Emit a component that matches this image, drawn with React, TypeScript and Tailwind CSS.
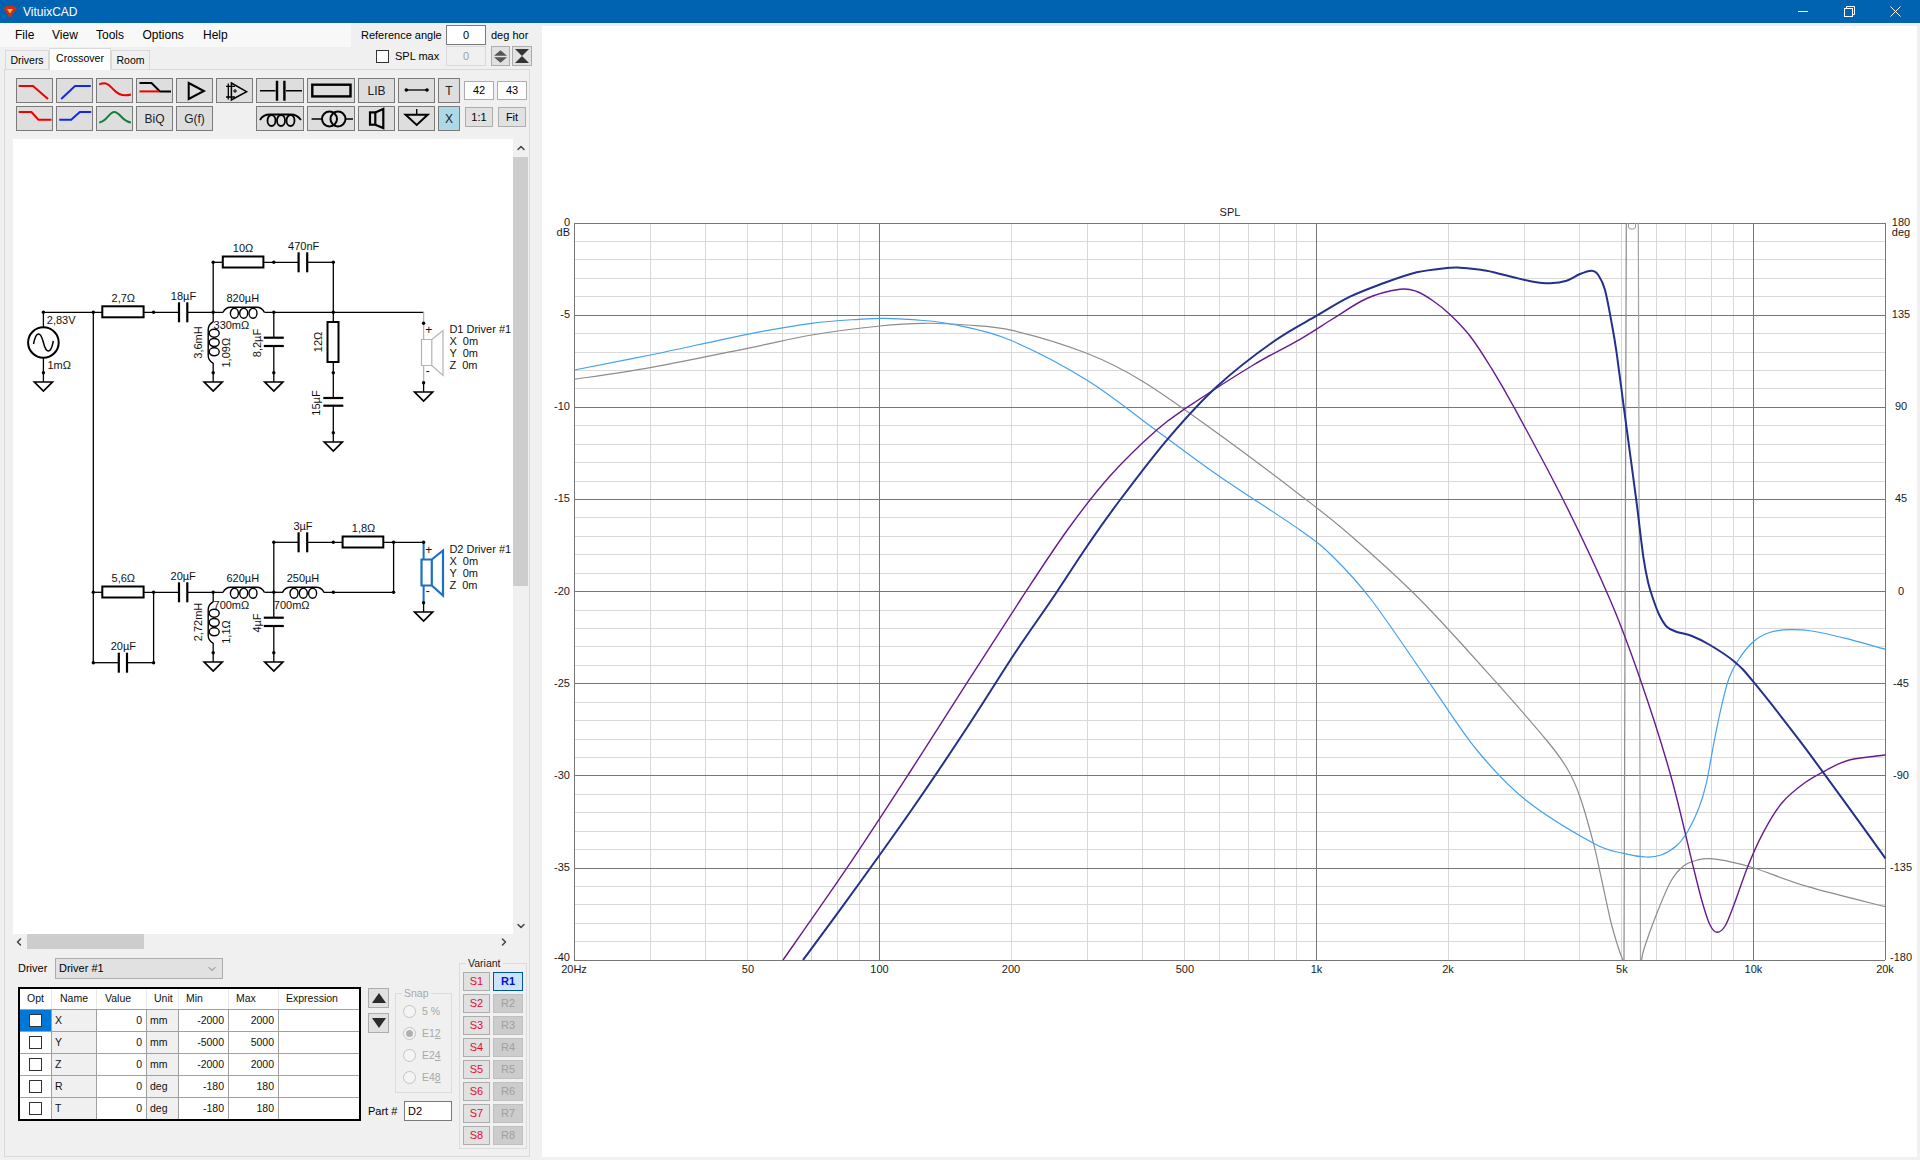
/**
 * VituixCAD crossover view - schematic editor on the left, SPL chart on the right
 */

import { ChevronDown, ChevronLeft, ChevronRight, ChevronUp } from "lucide-react";
import type { ReactNode } from "react";

type Pt = [number, number];
type Wire = [number, number, number, number];

const RED = "#f00000";
const BLUE = "#1226f0";
const GREEN = "#12803a";
const SPEAKER_BLUE = "#1c6fc4";
const SPEAKER_GRAY = "#b4b4b4";

/* ---------- chart data, in screen pixels ---------- */

const PLOT = { left: 574, right: 1885, top: 223, bottom: 960 };
const DECADE = 437;
const PER_DB = 18.43;

const freqX = (f: number) => PLOT.left + DECADE * Math.log10(f / 20);
const dbY = (db: number) => PLOT.top - PER_DB * db;

const lightBlueCurve: Pt[] = [
	[574.3, 370], [650.3, 355], [747.3, 334.3], [811.7, 323.3], [859.3, 319.3], [884, 318.3],
	[913, 319.7], [953.3, 324.5], [1010, 340], [1086.7, 380], [1156.7, 430.7],
	[1220, 476.7], [1300, 530], [1333, 556.7], [1371.5, 600], [1429.8, 683.3], [1476.8, 750], [1525.7, 800],
	[1593.5, 843.3], [1623.5, 853.3], [1646, 857], [1661, 855], [1676.2, 846], [1687.5, 831.7],
	[1698.8, 808.3], [1706.3, 783.3], [1713.8, 743.3], [1721.4, 706.7], [1729, 678.3], [1738.3, 660],
	[1753.3, 641.7], [1770.3, 632.3], [1789, 629.7], [1811.7, 631], [1845.5, 638.3], [1885.4, 649.3],
];

const grayCurveLeft: Pt[] = [
	[574.3, 379.3], [650.3, 367.7], [747.3, 348.3], [811.7, 335], [880, 326],
	[923.3, 323.3], [966.7, 325], [1013.3, 330.7], [1086.7, 353.3], [1143.3, 381.7], [1220, 435],
	[1300, 495], [1350, 535], [1420.5, 600], [1495.6, 681.7], [1548, 742], [1568, 770], [1580, 797],
	[1593.5, 843.3], [1601, 876.7], [1610.4, 920], [1618, 946.7], [1622.8, 960],
];

const grayCurveRight: Pt[] = [
	[1641.6, 960], [1644.2, 948.3], [1655.5, 916.7], [1670.6, 881.7], [1683.8, 865.7], [1698.8, 859.7],
	[1710, 858.7], [1725.1, 860.7], [1753.3, 867.7], [1807.9, 886.7], [1885.4, 906.7],
];

const navyCurve: Pt[] = [
	[803, 960], [846, 901.7], [911.5, 810], [966.6, 728.3], [1014.8, 653.3], [1051.4, 600], [1086.7, 546.7],
	[1120, 500], [1168.3, 438.3], [1216.7, 386.7], [1273.3, 341.7], [1316.7, 315.7], [1350, 296.7], [1383.3, 283.3],
	[1416.7, 272.3], [1446.7, 268], [1460, 267.7], [1486.7, 270.7], [1513.3, 277.3], [1533.3, 281.7], [1550, 283.3],
	[1566.7, 280.7], [1580, 274], [1591.7, 270.7], [1598.3, 275], [1605, 290], [1611.7, 323.3], [1616.7, 353.3],
	[1623.3, 403.3], [1630, 453.3], [1636.7, 503.3], [1643.3, 556.7], [1648.3, 583.3], [1653.5, 600], [1659.3, 615],
	[1666.8, 626.7], [1676.2, 631.7], [1691.3, 635.7], [1710, 645], [1734.5, 661.7], [1753.3, 681.7],
	[1800.4, 741.7], [1853, 813.3], [1885.4, 858.3],
];

const purpleCurve: Pt[] = [
	[783, 960], [847.8, 866.7], [908, 775], [966.6, 683.3], [1020.4, 600], [1066.7, 531], [1110, 476],
	[1156.7, 430], [1186.7, 407.7], [1253.3, 365], [1300, 339.3], [1333.3, 318.5], [1366.7, 298.5],
	[1400, 289.3], [1416.7, 291.5], [1433.3, 301], [1450, 314.5], [1470, 336], [1490, 366], [1513.3, 406],
	[1563.3, 500], [1610.2, 600], [1640.5, 680], [1670.6, 775], [1693.2, 866.7], [1702.6, 903.3], [1710, 925],
	[1716.9, 932.3], [1725.1, 926], [1734.5, 903.3], [1747.7, 866.7], [1762.8, 833.3], [1781.6, 803.3], [1804.1, 783.3],
	[1826.7, 770], [1849.3, 760], [1885.4, 755],
];

/** Catmull-Rom spline through the read-off points */
function smoothPath(pts: Pt[]): string {
	let d = `M${pts[0][0]} ${pts[0][1]}`;
	for (let i = 0; i < pts.length - 1; i++) {
		const p0 = pts[Math.max(i - 1, 0)];
		const p1 = pts[i];
		const p2 = pts[i + 1];
		const p3 = pts[Math.min(i + 2, pts.length - 1)];
		const c1x = p1[0] + (p2[0] - p0[0]) / 6;
		const c1y = p1[1] + (p2[1] - p0[1]) / 6;
		const c2x = p2[0] - (p3[0] - p1[0]) / 6;
		const c2y = p2[1] - (p3[1] - p1[1]) / 6;
		d += ` C${c1x.toFixed(1)} ${c1y.toFixed(1)} ${c2x.toFixed(1)} ${c2y.toFixed(1)} ${p2[0]} ${p2[1]}`;
	}
	return d;
}

const minorFreqs = [30, 40, 50, 60, 70, 80, 90, 200, 300, 400, 500, 600, 700, 800, 900, 2000, 3000, 4000, 5000, 6000, 7000, 8000, 9000];
const majorFreqs = [100, 1000, 10000];
const freqLabels: [number, string][] = [
	[20, "20Hz"], [50, "50"], [100, "100"], [200, "200"], [500, "500"], [1000, "1k"], [2000, "2k"], [5000, "5k"], [10000, "10k"], [20000, "20k"],
];
const dbSteps = [0, -5, -10, -15, -20, -25, -30, -35, -40];
const degSteps = [180, 135, 90, 45, 0, -45, -90, -135, -180];

function SplChart() {
	const dbMinor: number[] = [];
	for (let db = 0; db > -40; db -= 1) if (db % 5 !== 0) dbMinor.push(db);
	const crisp = (v: number) => Math.floor(v) + 0.5;

	return (
		<svg viewBox="542 26 1375 1131" className="block h-full w-full">
			<g shapeRendering="crispEdges" strokeWidth="1">
				{dbMinor.map((db) => (
					<line key={db} x1={PLOT.left} x2={PLOT.right} y1={crisp(dbY(db))} y2={crisp(dbY(db))} stroke="#d9d9d9" />
				))}
				{minorFreqs.map((f) => (
					<line key={f} x1={crisp(freqX(f))} x2={crisp(freqX(f))} y1={PLOT.top} y2={PLOT.bottom} stroke="#d9d9d9" />
				))}
				{dbSteps.map((db) => (
					<line key={db} x1={PLOT.left} x2={PLOT.right} y1={crisp(dbY(db))} y2={crisp(dbY(db))} stroke="#777777" />
				))}
				{majorFreqs.map((f) => (
					<line key={f} x1={crisp(freqX(f))} x2={crisp(freqX(f))} y1={PLOT.top} y2={PLOT.bottom} stroke="#777777" />
				))}
				<line x1={crisp(PLOT.left)} x2={crisp(PLOT.left)} y1={PLOT.top} y2={PLOT.bottom} stroke="#777777" />
				<line x1={crisp(PLOT.right)} x2={crisp(PLOT.right)} y1={PLOT.top} y2={PLOT.bottom} stroke="#777777" />
			</g>

			{/* Phase wrap of the gray trace, with the little cap on the top edge */}
			<path d="M1626.3 223 L1624 960" fill="none" stroke="#8a8a8a" strokeWidth="1.2" />
			<path d="M1638.3 223 L1640.5 960" fill="none" stroke="#a2a2a2" strokeWidth="1.2" />
			<path d="M1628.5 223 V227 Q1628.5 229 1631 229 H1633 Q1635.5 229 1635.5 227 V223" fill="none" stroke="#9a9a9a" strokeWidth="1" />

			<g fill="none" strokeLinejoin="round">
				<path d={smoothPath(grayCurveLeft)} stroke="#8c8c8c" strokeWidth="1.2" />
				<path d={smoothPath(grayCurveRight)} stroke="#8c8c8c" strokeWidth="1.2" />
				<path d={smoothPath(lightBlueCurve)} stroke="#45a0ee" strokeWidth="1.2" />
				<path d={smoothPath(purpleCurve)} stroke="#661a8f" strokeWidth="1.4" />
				<path d={smoothPath(navyCurve)} stroke="#252f8c" strokeWidth="2" />
			</g>

			<g fontSize="11" fill="#1a1a1a">
				<text x="1230" y="216" textAnchor="middle">SPL</text>
				<text x="570" y="236" textAnchor="end">dB</text>
				<text x="1901" y="236" textAnchor="middle">deg</text>
				{dbSteps.map((db) => (
					<text key={db} x="570" y={Math.round(dbY(db)) + (db === -40 ? 1 : 3)} textAnchor="end">
						{db}
					</text>
				))}
				{degSteps.map((deg, i) => (
					<text key={deg} x="1901" y={Math.round(dbY(-5 * i)) + (i === 8 ? 1 : 3)} textAnchor="middle">
						{deg}
					</text>
				))}
				{freqLabels.map(([f, label]) => (
					<text key={label} x={freqX(f)} y="973" textAnchor="middle">
						{label}
					</text>
				))}
			</g>
		</svg>
	);
}

/* ---------- schematic ---------- */

const wires: Wire[] = [
	// upper driver branch
	[43.4, 312.3, 102.3, 312.3],
	[143.6, 312.3, 179, 312.3],
	[187.3, 312.3, 223, 312.3],
	[264.5, 312.3, 423.6, 312.3],
	[43.4, 312.3, 43.4, 327],
	[43.4, 358, 43.4, 382],
	[213.2, 262.3, 213.2, 322],
	[213.2, 262.3, 222.8, 262.3],
	[263.4, 262.3, 298.6, 262.3],
	[307.2, 262.3, 333.3, 262.3],
	[333.3, 262.3, 333.3, 322],
	[333.3, 362, 333.3, 398],
	[333.3, 405.7, 333.3, 442],
	[213.2, 363, 213.2, 382],
	[273.8, 312.3, 273.8, 337.7],
	[273.8, 346, 273.8, 382],
	[423.6, 382.7, 423.6, 392],
	// lower driver branch
	[93.3, 312.3, 93.3, 662.7],
	[93.3, 592.3, 102.3, 592.3],
	[143.6, 592.3, 179, 592.3],
	[187.3, 592.3, 223, 592.3],
	[264.5, 592.3, 283, 592.3],
	[323.7, 592.3, 393.6, 592.3],
	[393.6, 542.3, 393.6, 592.3],
	[273.8, 542.3, 273.8, 617.7],
	[273.8, 542.3, 298.6, 542.3],
	[307.2, 542.3, 342.6, 542.3],
	[383.3, 542.3, 423.6, 542.3],
	[153.6, 592.3, 153.6, 662.7],
	[93.3, 662.7, 118.8, 662.7],
	[127, 662.7, 153.6, 662.7],
	[213.2, 592.3, 213.2, 602],
	[213.2, 643, 213.2, 662],
	[273.8, 626, 273.8, 662],
	[423.6, 602.7, 423.6, 612],
];

const nodes: Pt[] = [
	[43.4, 312.3], [93.3, 312.3], [153.6, 312.3], [213.2, 312.3], [273.8, 312.3], [333.3, 312.3], [423.6, 323.3],
	[43.4, 372.7], [213.2, 372.7], [273.8, 372.7], [333.3, 372.7], [423.6, 382.7], [333.3, 432.7],
	[213.2, 262.3], [273.8, 262.3], [333.3, 262.3],
	[93.3, 592.3], [153.6, 592.3], [213.2, 592.3], [273.8, 592.3], [333.3, 592.3], [393.6, 592.3],
	[273.8, 542.3], [333.3, 542.3], [393.6, 542.3], [423.6, 542.3], [423.6, 602.7],
	[93.3, 662.7], [153.6, 662.7], [213.2, 652.7], [273.8, 652.7],
];

const resistors: [number, number, number, number][] = [
	[102.3, 306.3, 41.3, 11],
	[222.8, 256.5, 40.6, 11],
	[327.5, 322, 11, 40],
	[102.3, 586.5, 41.3, 11],
	[342.6, 536.5, 40.7, 11],
];

// x or y of the two plates, plus the wire position they straddle
const seriesCaps: [number, number, number][] = [
	[179, 187.3, 312.3],
	[298.6, 307.2, 262.3],
	[179, 187.3, 592.3],
	[298.6, 307.2, 542.3],
	[118.8, 127, 662.7],
];
const shuntCaps: [number, number, number][] = [
	[337.7, 346, 273.8],
	[398, 405.7, 333.3],
	[617.7, 626, 273.8],
];

const grounds: Pt[] = [
	[43.4, 382], [213.2, 382], [273.8, 382], [333.3, 442], [423.6, 392],
	[213.2, 662], [273.8, 662], [423.6, 612],
];

const labels: [string, number, number][] = [
	["10Ω", 243, 248], ["470nF", 303.7, 246], ["2,7Ω", 123.3, 298], ["18µF", 183.5, 296], ["820µH", 242.8, 298],
	["330mΩ", 231.4, 325], ["5,6Ω", 123.3, 578], ["20µF", 183.2, 576], ["620µH", 242.8, 578], ["250µH", 303, 578],
	["700mΩ", 231.4, 605], ["700mΩ", 291.7, 605], ["3µF", 303, 526], ["1,8Ω", 363.6, 528], ["20µF", 123.3, 646],
];

const sideLabels: [string, number, number][] = [
	["2,83V", 46.8, 320], ["1mΩ", 47.5, 365],
	["D1 Driver #1", 449.4, 329], ["X  0m", 449.4, 341], ["Y  0m", 449.4, 353], ["Z  0m", 449.4, 365],
	["D2 Driver #1", 449.4, 549], ["X  0m", 449.4, 561], ["Y  0m", 449.4, 573], ["Z  0m", 449.4, 585],
];

const rotatedLabels: [string, number, number][] = [
	["3,6mH", 198, 342.5], ["1,09Ω", 225.5, 352.7], ["8,2µF", 256.5, 343], ["12Ω", 318, 342], ["15µF", 316, 403],
	["2,72mH", 198, 622], ["1,1Ω", 225.5, 632], ["4µF", 256.5, 623],
];

function Coil({ x, y, vertical = false }: { x: number; y: number; vertical?: boolean }) {
	return (
		<g transform={`translate(${x} ${y}) rotate(${vertical ? -90 : 0})`} fill="none" stroke="#000" strokeWidth="1.4">
			<path d="M-20.7 0 Q-18 -5 -13 -5 H13 Q18 -5 20.7 0" />
			<ellipse cx="-9.3" cy="1" rx="4" ry="5" />
			<ellipse cx="0" cy="1" rx="4" ry="5" />
			<ellipse cx="9.3" cy="1" rx="4" ry="5" />
		</g>
	);
}

function Speaker({ x, y, color, strokeWidth }: { x: number; y: number; color: string; strokeWidth: number }) {
	return (
		<path
			d={`M${x} ${y} h10.3 v26 h-10.3 Z M${x + 10.3} ${y} L${x + 21.5} ${y - 9} V${y + 36} L${x + 10.3} ${y + 26}`}
			fill="none"
			stroke={color}
			strokeWidth={strokeWidth}
		/>
	);
}

function Schematic() {
	return (
		<svg viewBox="13 139 500 795" className="block h-[795px] w-[500px] bg-white">
			<g stroke="#000" strokeWidth="1.3">
				{wires.map(([x1, y1, x2, y2]) => (
					<line key={`${x1}-${y1}-${x2}-${y2}`} x1={x1} y1={y1} x2={x2} y2={y2} />
				))}
			</g>

			{/* Driver feeds sit on top of the black wires */}
			<path d="M423.6 312.3 V339 M423.6 365 V382.7" stroke={SPEAKER_GRAY} strokeWidth="1.3" fill="none" />
			<path d="M423.6 542.3 V559 M423.6 585 V602.7" stroke={SPEAKER_BLUE} strokeWidth="2" fill="none" />
			<Speaker x={421.5} y={339.5} color={SPEAKER_GRAY} strokeWidth={1.2} />
			<Speaker x={421.5} y={559.5} color={SPEAKER_BLUE} strokeWidth={2.2} />

			{resistors.map(([x, y, w, h]) => (
				<rect key={`${x}-${y}`} x={x} y={y} width={w} height={h} fill="#fff" stroke="#000" strokeWidth="2" />
			))}

			<g stroke="#000" strokeWidth="2.2">
				{seriesCaps.map(([a, b, y]) => (
					<g key={`${a}-${y}`}>
						<line x1={a} x2={a} y1={y - 10} y2={y + 10} />
						<line x1={b} x2={b} y1={y - 10} y2={y + 10} />
					</g>
				))}
				{shuntCaps.map(([a, b, x]) => (
					<g key={`${a}-${x}`}>
						<line y1={a} y2={a} x1={x - 10} x2={x + 10} />
						<line y1={b} y2={b} x1={x - 10} x2={x + 10} />
					</g>
				))}
			</g>

			<Coil x={243.7} y={312.3} />
			<Coil x={243.7} y={592.3} />
			<Coil x={303.3} y={592.3} />
			<Coil x={213.2} y={342.5} vertical />
			<Coil x={213.2} y={622.5} vertical />

			{/* Source */}
			<circle cx="43.4" cy="342.5" r="15.3" fill="#fff" stroke="#000" strokeWidth="2" />
			<path d="M33.5 344 C36 331 40.5 331 43.4 342.5 C46.3 354 51 354 53.3 341" fill="none" stroke="#000" strokeWidth="1.5" />

			{grounds.map(([x, y]) => (
				<path key={`${x}-${y}`} d={`M${x - 9} ${y} H${x + 9} L${x} ${y + 9} Z`} fill="#fff" stroke="#000" strokeWidth="1.7" />
			))}

			<g fill="#000">
				{nodes.map(([x, y]) => (
					<circle key={`${x}-${y}`} cx={x} cy={y} r="1.7" />
				))}
			</g>

			<g fontSize="11" fill="#111">
				{labels.map(([text, x, y]) => (
					<text key={`${text}-${x}-${y}`} x={x} y={y + 4} textAnchor="middle">
						{text}
					</text>
				))}
				{sideLabels.map(([text, x, y]) => (
					<text key={`${text}-${y}`} x={x} y={y + 4} xmlSpace="preserve">
						{text}
					</text>
				))}
				{rotatedLabels.map(([text, x, y]) => (
					<text key={text} transform={`translate(${x + 4} ${y}) rotate(-90)`} textAnchor="middle">
						{text}
					</text>
				))}
				<text x="428.7" y="334" textAnchor="middle" fontSize="12">+</text>
				<text x="427.7" y="375" textAnchor="middle" fontSize="12">-</text>
				<text x="428.7" y="554" textAnchor="middle" fontSize="12">+</text>
				<text x="427.7" y="595" textAnchor="middle" fontSize="12">-</text>
			</g>
		</svg>
	);
}

/* ---------- toolbar ---------- */

function ToolButton({ children, wide = false, narrow = false, active = false }: { children: ReactNode; wide?: boolean; narrow?: boolean; active?: boolean }) {
	const width = wide ? "w-[48px]" : narrow ? "w-[22px]" : "w-[37px]";
	const bg = active ? "bg-[#add8e6]" : "bg-[#dedede]";
	return (
		<div className={`flex h-[25px] shrink-0 items-center justify-center border border-[#7a7a7a] text-[12px] text-[#222] ${width} ${bg}`}>
			{children}
		</div>
	);
}

function Glyph({ children, wide = false }: { children: ReactNode; wide?: boolean }) {
	return (
		<svg viewBox={wide ? "1 1 46 23" : "1 1 35 23"} className={`block h-[23px] ${wide ? "w-[46px]" : "w-[35px]"}`} fill="none" stroke="#000" strokeWidth="2">
			{children}
		</svg>
	);
}

function ToolbarRows() {
	return (
		<div className="ml-[3px] flex flex-col gap-[3px]">
			<div className="flex gap-[3px]">
				<ToolButton>
					<Glyph>
						<path d="M2.7 8 H17 L32 21" stroke={RED} />
					</Glyph>
				</ToolButton>
				<ToolButton>
					<Glyph>
						<path d="M5.2 21 L19 8 H34.8" stroke={BLUE} />
					</Glyph>
				</ToolButton>
				<ToolButton>
					<Glyph>
						<path d="M3.2 6.4 C11 3.5 13 7 18 12 C23 17.5 28 18.5 34.9 16.5" stroke={RED} />
					</Glyph>
				</ToolButton>
				<ToolButton>
					<Glyph>
						<path d="M3.5 5 H15.5 L24 13.4 H35" />
						<path d="M3.5 13.4 H23" stroke={RED} />
					</Glyph>
				</ToolButton>
				<ToolButton>
					<Glyph>
						<path d="M12.7 5 L27.9 13 L12.7 21 Z" />
					</Glyph>
				</ToolButton>
				<ToolButton>
					<Glyph>
						<path d="M15.4 5 L30.6 13.7 L15.4 22 Z" strokeWidth="1.5" />
						<path d="M10 8.4 H19 M10 19 H19 M12.3 5.5 V21.5" strokeWidth="1.3" />
						<path d="M19 11 V15 M17 13 H21" strokeWidth="1" />
					</Glyph>
				</ToolButton>
				<ToolButton wide>
					<Glyph wide>
						<path d="M4 12.7 H19.5 M30 12.7 H46" strokeWidth="1.4" />
						<path d="M21 2.7 V22.7 M28.4 2.7 V22.7" strokeWidth="2.4" />
					</Glyph>
				</ToolButton>
				<ToolButton wide>
					<Glyph wide>
						<rect x="5.3" y="6.7" width="38.2" height="11.7" strokeWidth="2.4" />
					</Glyph>
				</ToolButton>
				<ToolButton>LIB</ToolButton>
				<ToolButton>
					<Glyph>
						<path d="M8.3 12 H29" strokeWidth="1.3" />
						<circle cx="8.3" cy="12" r="1.8" fill="#000" stroke="none" />
						<circle cx="29" cy="12" r="1.8" fill="#000" stroke="none" />
					</Glyph>
				</ToolButton>
				<ToolButton narrow>T</ToolButton>
				<div className="ml-[1px] mt-[3px] flex h-[19px] w-[30px] items-center justify-center border border-[#adadad] bg-white text-[11px]">42</div>
				<div className="mt-[3px] flex h-[19px] w-[30px] items-center justify-center border border-[#adadad] bg-white text-[11px]">43</div>
			</div>
			<div className="flex gap-[3px]">
				<ToolButton>
					<Glyph>
						<path d="M2.7 6 H15.5 L22.4 13.7 H35.5" stroke={RED} />
					</Glyph>
				</ToolButton>
				<ToolButton>
					<Glyph>
						<path d="M3.2 13.7 H15.2 L23.8 6 H35.2" stroke={BLUE} />
					</Glyph>
				</ToolButton>
				<ToolButton>
					<Glyph>
						<path d="M3.2 16.4 C11 15.5 13 6 18.3 6 C24 6 26 15.5 34.9 16.4" stroke={GREEN} />
					</Glyph>
				</ToolButton>
				<ToolButton>BiQ</ToolButton>
				<ToolButton>G(f)</ToolButton>
				<div className="w-[37px]" />
				<ToolButton wide>
					<Glyph wide>
						<g strokeWidth="1.8">
							<path d="M4 14 Q7 8.5 14 8.5 H35 Q41 8.5 45 14" />
							<ellipse cx="15.5" cy="14.5" rx="4" ry="5.5" />
							<ellipse cx="25" cy="14.5" rx="4" ry="5.5" />
							<ellipse cx="34.5" cy="14.5" rx="4" ry="5.5" />
						</g>
					</Glyph>
				</ToolButton>
				<ToolButton wide>
					<Glyph wide>
						<path d="M4.6 13 H15 M38.5 13 H46" strokeWidth="1.4" />
						<circle cx="22.5" cy="13" r="7.5" />
						<circle cx="31" cy="13" r="7.5" />
					</Glyph>
				</ToolButton>
				<ToolButton>
					<Glyph>
						<rect x="12" y="6.4" width="5.3" height="12.3" strokeWidth="2.2" />
						<path d="M17.3 6.4 L25.3 3 V22 L17.3 18.7" strokeWidth="2.2" />
					</Glyph>
				</ToolButton>
				<ToolButton>
					<Glyph>
						<path d="M18.7 3 V8.7" strokeWidth="1.4" />
						<path d="M7.6 8.7 H29.7 L18.7 19 Z" />
					</Glyph>
				</ToolButton>
				<ToolButton narrow active>X</ToolButton>
				<div className="ml-[2px] mt-[1px] flex h-[20px] w-[28px] items-center justify-center border border-[#adadad] bg-[#e1e1e1] text-[11px]">1:1</div>
				<div className="ml-[2px] mt-[1px] flex h-[20px] w-[28px] items-center justify-center border border-[#adadad] bg-[#e1e1e1] text-[11px]">Fit</div>
			</div>
		</div>
	);
}

/* ---------- parameter table ---------- */

const tableRows = [
	{ name: "X", unit: "mm", min: "-2000", max: "2000" },
	{ name: "Y", unit: "mm", min: "-5000", max: "5000" },
	{ name: "Z", unit: "mm", min: "-2000", max: "2000" },
	{ name: "R", unit: "deg", min: "-180", max: "180" },
	{ name: "T", unit: "deg", min: "-180", max: "180" },
];

const LINE = "border-b border-r border-[#a0a0a0]";
const HEAD = "flex h-full items-center border-r border-[#e8e8e8]";

function ParameterTable() {
	return (
		<div className="w-[343px] border-2 border-black bg-white text-[10.5px] text-[#111]">
			<div className="grid h-[21px] grid-cols-[32px_45px_50px_32px_50px_50px_1fr] items-center border-b border-[#a0a0a0]">
				<span className={`${HEAD} justify-center`}>Opt</span>
				<span className={`${HEAD} pl-[8px]`}>Name</span>
				<span className={`${HEAD} pl-[8px]`}>Value</span>
				<span className={`${HEAD} pl-[7px]`}>Unit</span>
				<span className={`${HEAD} pl-[7px]`}>Min</span>
				<span className={`${HEAD} pl-[7px]`}>Max</span>
				<span className="pl-[7px]">Expression</span>
			</div>
			{tableRows.map((row, i) => (
				<div key={row.name} className="grid h-[22px] grid-cols-[32px_45px_50px_32px_50px_50px_1fr] last:h-[21px] last:[&>*]:border-b-0">
					<div className={`flex items-center justify-center ${LINE} ${i === 0 ? "bg-[#0078d7]" : "bg-white"}`}>
						<span className="block h-[13px] w-[13px] border border-[#333] bg-white" />
					</div>
					<div className={`flex items-center bg-[#f0f0f0] pl-[3px] ${LINE}`}>{row.name}</div>
					<div className={`flex items-center justify-end pr-[4px] ${LINE}`}>0</div>
					<div className={`flex items-center bg-[#f0f0f0] pl-[3px] ${LINE}`}>{row.unit}</div>
					<div className={`flex items-center justify-end pr-[4px] ${LINE}`}>{row.min}</div>
					<div className={`flex items-center justify-end pr-[4px] ${LINE}`}>{row.max}</div>
					<div className="border-b border-[#a0a0a0]" />
				</div>
			))}
		</div>
	);
}

function SnapGroup() {
	const options: [ReactNode, boolean][] = [
		["5 %", false],
		[<>E1<u>2</u></>, true],
		[<>E2<u>4</u></>, false],
		[<>E4<u>8</u></>, false],
	];
	return (
		<div className="relative ml-[6px] mt-[5px] flex h-[100px] w-[57px] flex-col gap-[9px] border border-[#dcdcdc] pl-[7px] pt-[11px] text-[10.5px] text-[#a8a8a8]">
			<span className="absolute left-[6px] top-[-6px] bg-[#f0f0f0] px-[2px] leading-none">Snap</span>
			{options.map(([label], i) => (
				<div key={i} className="flex h-[13px] items-center gap-[6px]">
					<span className="flex h-[13px] w-[13px] items-center justify-center rounded-full border border-[#c4c4c4] bg-[#f4f4f4]">
						{options[i][1] && <span className="h-[7px] w-[7px] rounded-full bg-[#b0b0b0]" />}
					</span>
					<span>{label}</span>
				</div>
			))}
		</div>
	);
}

function VariantGroup() {
	const rows = [1, 2, 3, 4, 5, 6, 7, 8];
	return (
		<div className="relative ml-[7px] mt-[14px] h-[186px] w-[68px] border border-[#dcdcdc] pl-[3px] pt-[8px]">
			<span className="absolute left-[6px] top-[-6px] bg-[#f0f0f0] px-[2px] text-[10.5px] leading-none text-[#222]">Variant</span>
			<div className="grid grid-cols-[27px_30px] gap-x-[3px] gap-y-[3px]">
				{rows.map((n) => (
					<div key={n} className="contents">
						<div className="flex h-[19px] items-center justify-center border border-[#adadad] bg-[#e1e1e1] text-[11px] text-[#e01030]">
							S{n}
						</div>
						{n === 1 ? (
							<div className="flex h-[19px] items-center justify-center border border-[#00569c] bg-[#cce4f7] text-[11px] font-bold text-[#0010d8]">
								R1
							</div>
						) : (
							<div className="flex h-[19px] items-center justify-center border border-[#c0c0c0] bg-[#cccccc] text-[11px] text-[#a0a0a0]">
								R{n}
							</div>
						)}
					</div>
				))}
			</div>
		</div>
	);
}

function Triangle({ down = false }: { down?: boolean }) {
	return (
		<svg viewBox="0 0 14 10" className="block h-[10px] w-[14px]">
			<path d={down ? "M0 0 H14 L7 10 Z" : "M7 0 L14 10 H0 Z"} fill="#2b2b2b" />
		</svg>
	);
}

/* ---------- page ---------- */

export default function App() {
	return (
		<div className="flex h-[1160px] w-[1920px] flex-col overflow-hidden bg-[#f0f0f0] font-['Liberation_Sans',sans-serif] text-[11px] text-black">
			{/* Title bar */}
			<div className="flex h-[23px] shrink-0 items-center bg-[#0063b1] pl-[3px] text-white">
				<svg viewBox="0 0 14 12" className="h-[12px] w-[14px]">
					<path d="M0 2 L4 0 H10 L14 2 L7 12 Z" fill="#c9301a" />
					<path d="M4 3 H10 L7 7.5 Z" fill="#f4bb2a" />
				</svg>
				<span className="ml-[6px] text-[12px]">VituixCAD</span>
				<div className="ml-auto mr-[2px] flex">
					<div className="flex h-[23px] w-[46px] items-center justify-center">
						<span className="block h-px w-[10px] bg-white" />
					</div>
					<div className="flex h-[23px] w-[46px] items-center justify-center">
						<svg viewBox="0 0 11 11" className="h-[11px] w-[11px]" fill="none" stroke="#fff" strokeWidth="1">
							<rect x="0.5" y="2.5" width="8" height="8" />
							<path d="M2.5 2.5 V0.5 H10.5 V8.5 H8.5" />
						</svg>
					</div>
					<div className="flex h-[23px] w-[46px] items-center justify-center">
						<svg viewBox="0 0 11 11" className="h-[11px] w-[11px]" fill="none" stroke="#fff" strokeWidth="1">
							<path d="M0.5 0.5 L10.5 10.5 M10.5 0.5 L0.5 10.5" />
						</svg>
					</div>
				</div>
			</div>

			<div className="flex min-h-0 flex-1">
				{/* Left column */}
				<div className="flex w-[542px] shrink-0 flex-col">
					<div className="flex h-[46px] shrink-0">
						<div className="flex w-[351px] flex-col">
							<div className="flex h-[24px] items-center bg-[#f8f8f8] pl-[15px] text-[12px]">
								<span className="w-[37px]">File</span>
								<span className="w-[44px]">View</span>
								<span className="w-[46.5px]">Tools</span>
								<span className="w-[60.5px]">Options</span>
								<span>Help</span>
							</div>
							<div className="relative z-10 flex h-[22px] items-end pl-[5px] text-[10.5px]">
								<div className="flex h-[19px] w-[44px] items-center justify-center border border-b-0 border-[#d9d9d9] pt-[2px]">Drivers</div>
								<div className="mb-[-1px] flex h-[22px] w-[62px] items-center justify-center border border-b-0 border-[#d9d9d9] bg-white pb-[2px]">Crossover</div>
								<div className="flex h-[19px] w-[39px] items-center justify-center border border-b-0 border-[#d9d9d9] pt-[2px]">Room</div>
							</div>
						</div>
						<div className="flex flex-col gap-[1px] pt-[2px]">
							<div className="flex h-[20px] items-center pl-[10px]">
								<span className="w-[85px]">Reference angle</span>
								<span className="flex h-[20px] w-[40px] items-center justify-center border border-[#7a7a7a] bg-white">0</span>
								<span className="ml-[5px]">deg hor</span>
							</div>
							<div className="flex h-[20px] items-center pl-[25px]">
								<span className="block h-[13px] w-[13px] border border-[#333] bg-white" />
								<span className="ml-[6px] w-[51px]">SPL max</span>
								<span className="flex h-[20px] w-[40px] items-center justify-center border border-[#d9d9d9] bg-[#f0f0f0] text-[#a0a0a0]">0</span>
								<div className="ml-[5px] flex h-[20px] w-[19px] flex-col items-center justify-center gap-[1px] border border-[#adadad] bg-[#e1e1e1]">
									<svg viewBox="0 0 14 6" className="h-[6px] w-[13px]"><path d="M7 0 L14 6 H0 Z" fill="#555" /></svg>
									<svg viewBox="0 0 14 6" className="h-[6px] w-[13px]"><path d="M0 0 H14 L7 6 Z" fill="#555" /></svg>
								</div>
								<div className="ml-[2px] flex h-[20px] w-[20px] flex-col items-center justify-center border border-[#adadad] bg-[#e1e1e1]">
									<svg viewBox="0 0 14 7" className="h-[7px] w-[14px]"><path d="M0 0 H14 L7 7 Z" fill="#333" /></svg>
									<svg viewBox="0 0 14 7" className="h-[7px] w-[14px]"><path d="M7 0 L14 7 H0 Z" fill="#333" /></svg>
								</div>
							</div>
						</div>
					</div>

					{/* Crossover tab page */}
					<div className="ml-[4px] flex h-[1088px] w-[526px] flex-col border border-[#d9d9d9] pl-[8px] pt-[8px]">
						<ToolbarRows />

						<div className="mt-[8px] flex h-[795px]">
							<Schematic />
							<div className="flex w-[15px] flex-col items-center">
								<ChevronUp className="mt-[3px] h-[12px] w-[12px] text-[#444]" strokeWidth={3} />
								<div className="mt-[3px] h-[429px] w-[15px] bg-[#cdcdcd]" />
								<ChevronDown className="mb-[2px] mt-auto h-[12px] w-[12px] text-[#444]" strokeWidth={3} />
							</div>
						</div>
						<div className="flex h-[15px] items-center">
							<ChevronLeft className="h-[12px] w-[12px] text-[#444]" strokeWidth={3} />
							<div className="ml-[2px] h-[15px] w-[117px] bg-[#cdcdcd]" />
							<ChevronRight className="ml-[354px] h-[12px] w-[12px] text-[#444]" strokeWidth={3} />
						</div>

						<div className="flex">
							<div className="ml-[5px] flex flex-col pt-[9px]">
								<div className="flex h-[21px] items-center">
									<span className="w-[37px]">Driver</span>
									<div className="flex h-[21px] w-[168px] items-center justify-between border border-[#adadad] bg-[#e1e1e1] pl-[3px] pr-[4px]">
										<span>Driver #1</span>
										<ChevronDown className="h-[12px] w-[12px] text-[#555]" strokeWidth={1.5} />
									</div>
								</div>
								<div className="mt-[8px]">
									<ParameterTable />
								</div>
							</div>

							<div className="ml-[7px] flex flex-col pt-[39px]">
								<div className="flex">
									<div className="flex w-[21px] flex-col gap-[5px]">
										<div className="flex h-[20px] items-center justify-center border border-[#adadad] bg-[#e1e1e1]">
											<Triangle />
										</div>
										<div className="flex h-[20px] items-center justify-center border border-[#adadad] bg-[#e1e1e1]">
											<Triangle down />
										</div>
									</div>
									<SnapGroup />
								</div>
								<div className="mt-[8px] flex h-[20px] items-center">
									<span className="w-[36px]">Part #</span>
									<span className="flex h-[20px] w-[48px] items-center border border-[#7a7a7a] bg-white pl-[3px]">D2</span>
								</div>
							</div>

							<VariantGroup />
						</div>
					</div>
				</div>

				{/* SPL chart */}
				<div className="mb-[3px] mr-[3px] mt-[3px] flex-1 bg-white">
					<SplChart />
				</div>
			</div>
		</div>
	);
}
